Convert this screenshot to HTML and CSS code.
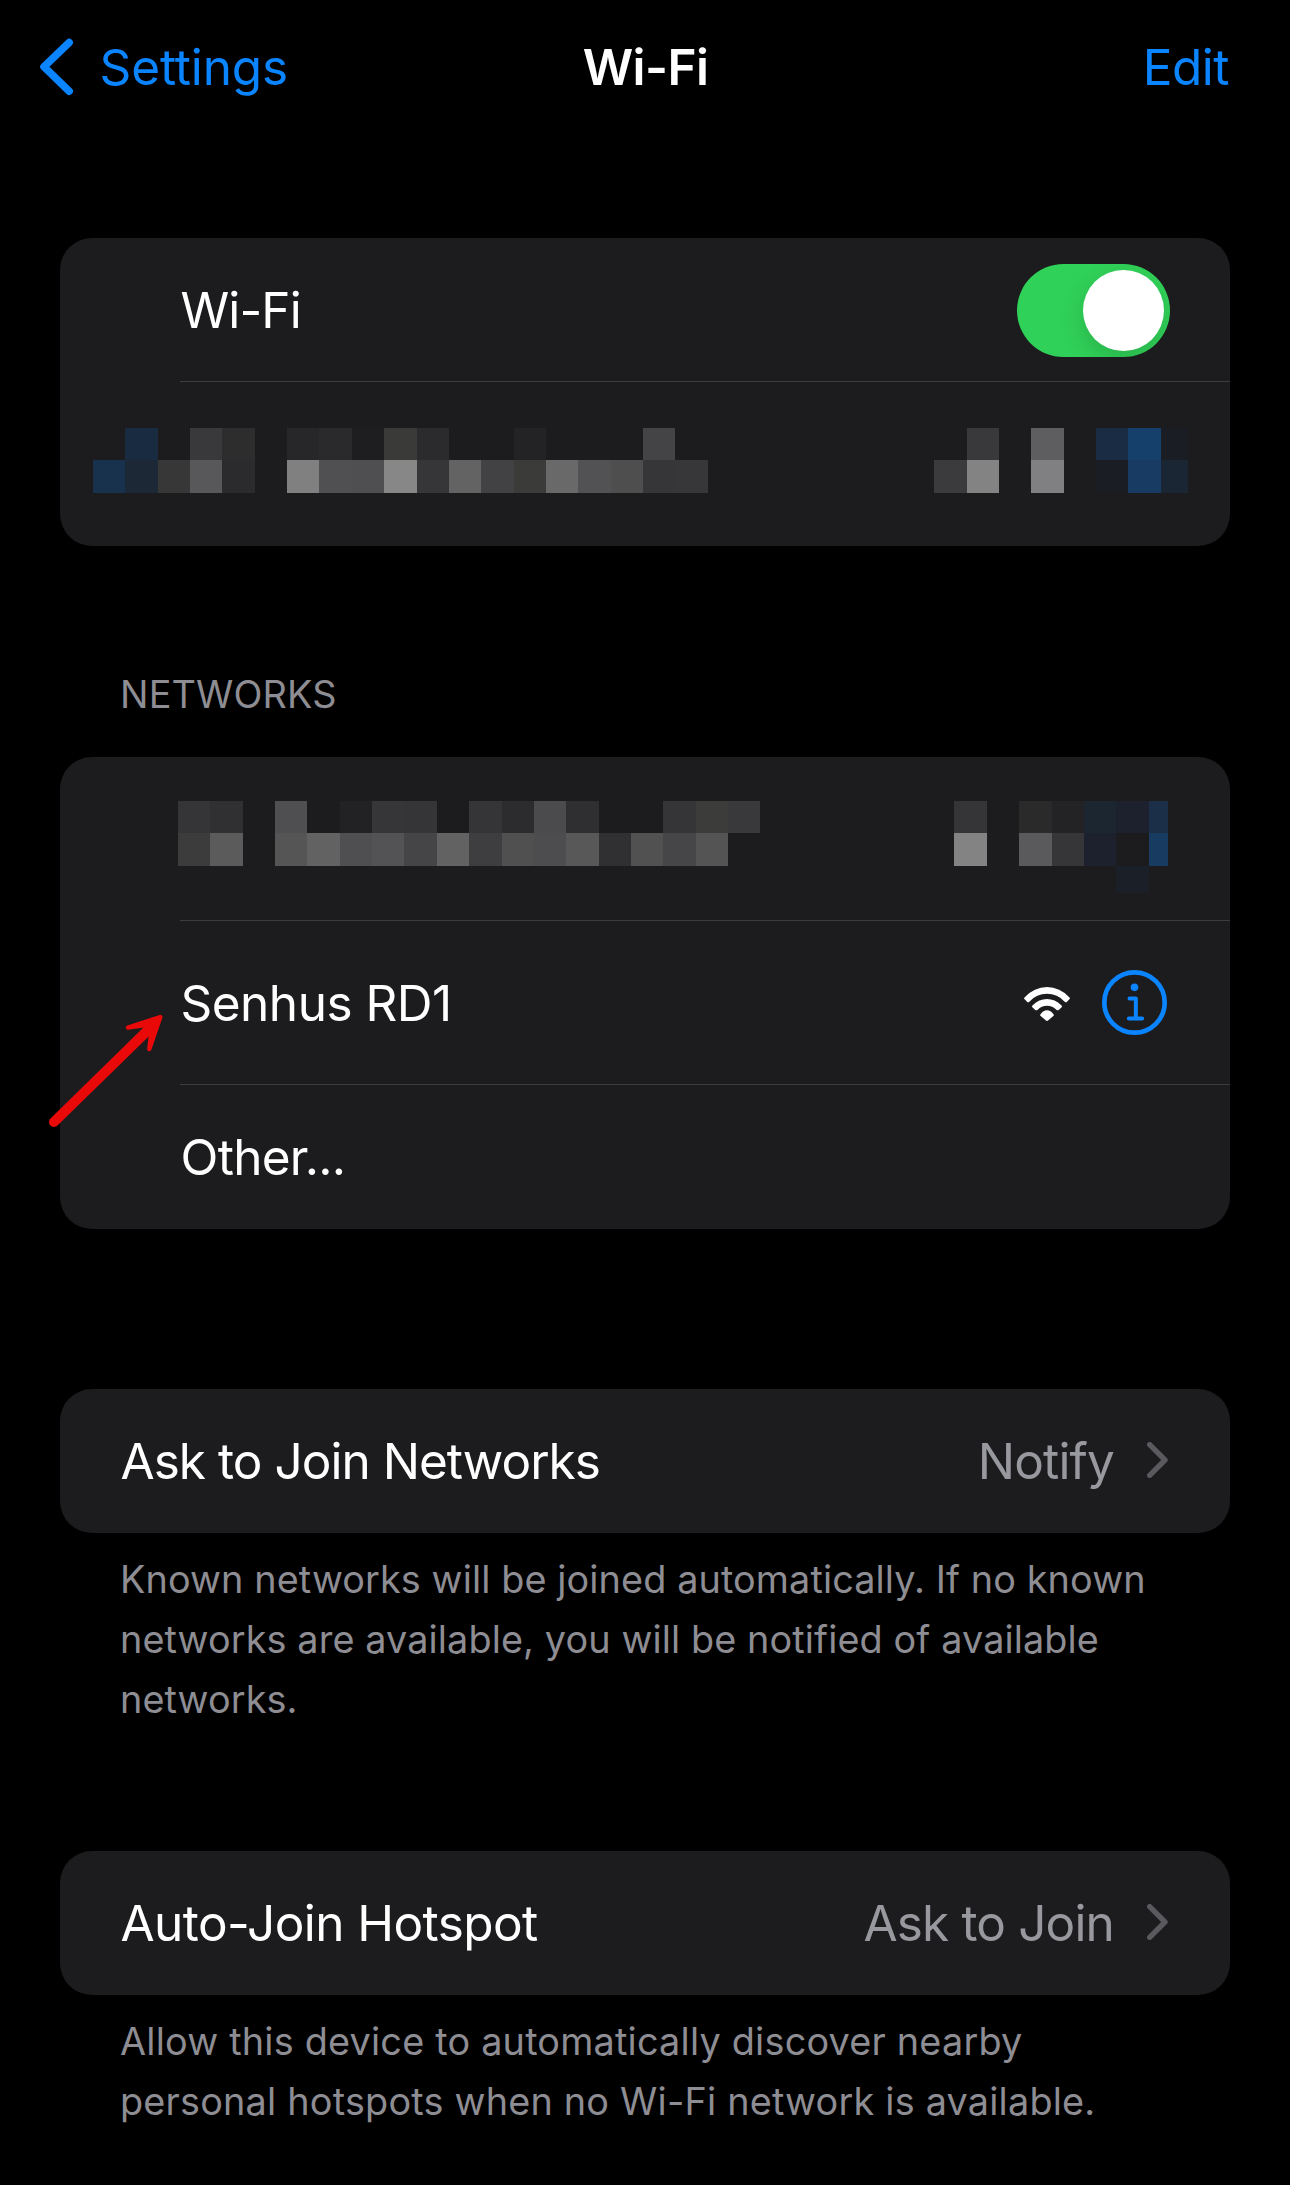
FILE: index.html
```html
<!DOCTYPE html>
<html lang="en">
<head>
<meta charset="utf-8">
<title>Wi-Fi</title>
<link rel="stylesheet" href="styles.css">
</head>
<body>
<div class="screen">
  <header class="nav">
    <a class="back">
      <svg class="back-icon" width="34" height="58" viewBox="40 38 34 58"><path d="M69.2 42.5 44 66.8 69.2 91.2"/></svg>
      <span class="back-label">Settings</span>
    </a>
    <h1 class="title">Wi-Fi</h1>
    <a class="edit">Edit</a>
  </header>

  <main class="content">
    <section class="card">
      <div class="row indent">
        <span class="label wifi-label">Wi-Fi</span>
        <span class="toggle"><span class="knob"></span></span>
      </div>
      <div class="row hidden-row current">
        <svg class="mosaic" width="1170" height="65" viewBox="60 428 1170 65">
          <path fill="#192b41" d="M125 428h33v32h-33z"/><path fill="#39393b" d="M190 428h32v32h-32z"/><path fill="#2d2d2d" d="M222 428h33v32h-33z"/><path fill="#272729" d="M287 428h32v32h-32z"/><path fill="#2a2a2c" d="M319 428h33v32h-33z"/><path fill="#1e1e20" d="M352 428h32v32h-32z"/><path fill="#3a3a38" d="M384 428h33v32h-33z"/><path fill="#2b2b2d" d="M417 428h32v32h-32z"/><path fill="#232325" d="M514 428h32v32h-32z"/><path fill="#444446" d="M643 428h32v32h-32z"/>
          <path fill="#18324e" d="M93 460h32v33H93z"/><path fill="#1c2836" d="M125 460h33v33h-33z"/><path fill="#373738" d="M158 460h32v33h-32z"/><path fill="#58585a" d="M190 460h32v33h-32z"/><path fill="#2b2b2d" d="M222 460h33v33h-33z"/><path fill="#808080" d="M287 460h32v33h-32z"/><path fill="#505052" d="M319 460h33v33h-33z"/><path fill="#4f4f51" d="M352 460h32v33h-32z"/><path fill="#878787" d="M384 460h33v33h-33z"/><path fill="#363638" d="M417 460h32v33h-32z"/><path fill="#636363" d="M449 460h32v33h-32z"/><path fill="#424244" d="M481 460h33v33h-33z"/><path fill="#3b3b39" d="M514 460h32v33h-32z"/><path fill="#696969" d="M546 460h32v33h-32z"/><path fill="#525254" d="M578 460h33v33h-33z"/><path fill="#4e4e4e" d="M611 460h32v33h-32z"/><path fill="#363638" d="M643 460h32v33h-32z"/><path fill="#373739" d="M675 460h33v33h-33z"/>
          <path fill="#3b3b3d" d="M934 460h33v33h-33z"/><path fill="#39393b" d="M967 428h32v32h-32z"/><path fill="#838383" d="M967 460h32v33h-32z"/><path fill="#5e5e60" d="M1031 428h33v32h-33z"/><path fill="#808082" d="M1031 460h33v33h-33z"/><path fill="#1a2c43" d="M1096 428h32v32h-32z"/><path fill="#1b1d25" d="M1096 460h32v33h-32z"/><path fill="#16406c" d="M1128 428h33v32h-33z"/><path fill="#173b63" d="M1128 460h33v33h-33z"/><path fill="#1b1d25" d="M1161 428h27v32h-27z"/><path fill="#1b2634" d="M1161 460h27v33h-27z"/>
        </svg>
      </div>
    </section>

    <h2 class="section-title">NETWORKS</h2>
    <section class="card">
      <div class="row hidden-row network">
        <svg class="mosaic" width="1170" height="92" viewBox="60 801 1170 92">
          <path fill="#353537" d="M178 801h32v32h-32z"/><path fill="#303032" d="M210 801h33v32h-33z"/><path fill="#4f4f51" d="M275 801h32v32h-32z"/><path fill="#222224" d="M340 801h32v32h-32z"/><path fill="#363638" d="M372 801h32v32h-32z"/><path fill="#353537" d="M404 801h33v32h-33z"/><path fill="#353537" d="M469 801h33v32h-33z"/><path fill="#2c2c2e" d="M502 801h32v32h-32z"/><path fill="#4b4b4d" d="M534 801h32v32h-32z"/><path fill="#2f2f31" d="M566 801h33v32h-33z"/><path fill="#353537" d="M663 801h33v32h-33z"/><path fill="#3c3c3a" d="M696 801h32v32h-32z"/><path fill="#39393b" d="M728 801h32v32h-32z"/>
          <path fill="#3c3c3c" d="M178 833h32v33h-32z"/><path fill="#5b5b5b" d="M210 833h33v33h-33z"/><path fill="#555" d="M275 833h32v33h-32z"/><path fill="#626262" d="M307 833h33v33h-33z"/><path fill="#4f4f51" d="M340 833h32v33h-32z"/><path fill="#535355" d="M372 833h32v33h-32z"/><path fill="#454547" d="M404 833h33v33h-33z"/><path fill="#626262" d="M437 833h32v33h-32z"/><path fill="#3e3e40" d="M469 833h33v33h-33z"/><path fill="#505050" d="M502 833h32v33h-32z"/><path fill="#4d4d4f" d="M534 833h32v33h-32z"/><path fill="#585858" d="M566 833h33v33h-33z"/><path fill="#303032" d="M599 833h32v33h-32z"/><path fill="#515151" d="M631 833h32v33h-32z"/><path fill="#464648" d="M663 833h33v33h-33z"/><path fill="#545454" d="M696 833h32v33h-32z"/>
          <path fill="#353537" d="M954 801h33v32h-33z"/><path fill="#838383" d="M954 833h33v33h-33z"/><path fill="#2a2a2a" d="M1019 801h33v32h-33z"/><path fill="#5a5a5c" d="M1019 833h33v33h-33z"/><path fill="#232325" d="M1052 801h32v32h-32z"/><path fill="#363638" d="M1052 833h32v33h-32z"/><path fill="#1b2631" d="M1084 801h32v32h-32z"/><path fill="#1c212d" d="M1084 833h32v33h-32zM1116 801h33v32h-33z"/><path fill="#1b1f27" d="M1116 866h33v27h-33z"/><path fill="#1b3048" d="M1149 801h19v32h-19z"/><path fill="#183b62" d="M1149 833h19v33h-19z"/>
        </svg>
      </div>
      <div class="row indent network line-above">
        <span class="label senhus">Senhus RD1</span>
        <span class="icons">
          <svg width="46" height="34" viewBox="312 741 138 102" fill="#fff">
            <path d="M315 771A88 88 0 0 1 447 771Q452 775 448 778L441 785Q438 788 434 785A70.500 70.500 0 0 0 328 785Q324 788 321 785L314 778Q310 775 315 771Z"/>
            <path d="M339 795A58 58 0 0 1 423 795Q429 799 425 802L417 809Q413 813 409 809A38.700 38.700 0 0 0 353 809Q349 813 345 809L337 802Q333 799 339 795Z"/>
            <path d="M363 821A21 21 0 0 1 399 821Q404 825 400 828L385 841Q381 845 377 841L362 828Q358 825 363 821Z"/>
          </svg>
          <svg width="65" height="65" viewBox="545.5 690 195 195" fill="none" stroke="#0a84ff" stroke-linecap="round" stroke-linejoin="round">
            <circle cx="643" cy="787.500" r="90.500" stroke-width="14"/>
            <circle cx="643" cy="742" r="11.500" fill="#0a84ff" stroke="none"/>
            <path stroke-width="12" d="M628 775.500H647V834M626 835.500H666"/>
          </svg>
        </span>
      </div>
      <div class="row indent last line-above">
        <span class="label other">Other...</span>
      </div>
      <svg class="arrow" width="120" height="120" viewBox="45 330 360 360" fill="#e90909" stroke="#e90909" stroke-linecap="round" stroke-linejoin="round">
        <path stroke-width="30" d="M72 666 350 394"/>
        <path stroke-width="13" d="M391 351 294 383 348 375 364 392 358 447Z"/>
      </svg>
    </section>

    <section class="card ask">
      <div class="row">
        <span class="label ask-label">Ask to Join Networks</span>
        <span class="value">Notify
          <svg class="chevron" width="21" height="36" viewBox="741 216 63 108"><path d="M749 224 795 270 749 316"/></svg>
        </span>
      </div>
    </section>
    <p class="note">Known networks will be joined automatically. If no known<br>networks are available, you will be notified of available<br>networks.</p>

    <section class="card hotspot">
      <div class="row">
        <span class="label hotspot-label">Auto-Join Hotspot</span>
        <span class="value">Ask to Join
          <svg class="chevron" width="21" height="36" viewBox="741 216 63 108"><path d="M749 224 795 270 749 316"/></svg>
        </span>
      </div>
    </section>
    <p class="note hotspot-note">Allow this device to automatically discover nearby<br>personal hotspots when no Wi-Fi network is available.</p>
  </main>
</div>
</body>
</html>
```
FILE: styles.css
```css
* { box-sizing: border-box; }

body {
  margin: 0;
  background: #000;
  color: #fff;
  font: 400 49.5px/60px Inter, "Liberation Sans", sans-serif;
}

h1, h2, p { margin: 0; }
svg { display: block; flex: none; }

.screen {
  width: 1290px;
  height: 2185px;
  overflow: hidden;
}

.nav {
  height: 134px;
  display: grid;
  grid-template-columns: 1fr auto 1fr;
  align-items: center;
  padding: 0 61px 0 40px;
}
.back { display: flex; align-items: center; gap: 25.5px; color: #0a84ff; letter-spacing: -0.12px; }
.back-icon path {
  fill: none;
  stroke: #0a84ff;
  stroke-width: 7.5;
  stroke-linecap: round;
  stroke-linejoin: round;
}
.title {
  font-size: inherit;
  font-weight: 600;
  letter-spacing: -0.6px;
  padding-left: 22px;
}
.edit { justify-self: end; color: #0a84ff; letter-spacing: -0.5px; }

.content { padding: 104px 60px 0; }

.card {
  position: relative;
  background: #1c1c1e;
  border-radius: 32px;
}
.row {
  position: relative;
  height: 144px;
  padding: 0 60px 0 60.5px;
  display: flex;
  align-items: center;
  justify-content: space-between;
}
.indent { padding-left: 120.5px; }
.last { height: 145px; padding-top: 1px; }
.network { height: 164px; }
.current { height: 164px; }
.hidden-row { padding: 0; align-items: flex-start; }
.hidden-row.current { padding-top: 46px; }
.hidden-row.network { height: 163px; padding-top: 44px; }
.mosaic { shape-rendering: crispEdges; }

/* Hairline separators start at the label column */
.row.line-above::before,
.hidden-row.current::before {
  content: "";
  position: absolute;
  top: 0;
  left: 120px;
  right: 0;
  height: 1px;
  background: #3d3d41;
}
.hidden-row.current::before { top: -1px; }

.wifi-label { letter-spacing: -0.9px; }
.senhus { letter-spacing: -0.5px; padding-top: 2px; }
.other { letter-spacing: -0.7px; }
.ask-label { letter-spacing: -0.97px; }
.hotspot-label { letter-spacing: -0.57px; }

.toggle {
  width: 153px;
  height: 93px;
  padding: 6px;
  display: flex;
  justify-content: flex-end;
  border-radius: 47px;
  background: #30d158;
  overflow: hidden;
}
.knob {
  width: 81px;
  height: 81px;
  border-radius: 50%;
  background: #fff;
  box-shadow: 0 9px 24px rgba(0, 0, 0, 0.15);
}

.icons { display: flex; align-items: center; gap: 32px; padding-right: 3px; }
.icons svg:first-child { margin-top: 3px; }

.arrow { position: absolute; left: -15px; top: 253px; }

.section-title {
  margin: 118px 0 33px 60px;
  font-size: 37.8px;
  font-weight: 400;
  letter-spacing: 0.15px;
  color: #8d8d93;
}

.ask { margin-top: 160px; }
.hotspot { margin-top: 122px; }

.value {
  display: flex;
  align-items: center;
  gap: 33px;
  padding-right: 2px;
  letter-spacing: -0.85px;
  color: #98989f;
}
.chevron { position: relative; top: -1px; }
.chevron path {
  fill: none;
  stroke: #5a5a5e;
  stroke-width: 16;
  stroke-linecap: round;
  stroke-linejoin: round;
}

.note {
  margin: 16px 0 0 60px;
  font-size: 37.8px;
  letter-spacing: 0.11px;
  color: #8d8d93;
  white-space: nowrap;
}
.hotspot-note { letter-spacing: 0.21px; }
```
